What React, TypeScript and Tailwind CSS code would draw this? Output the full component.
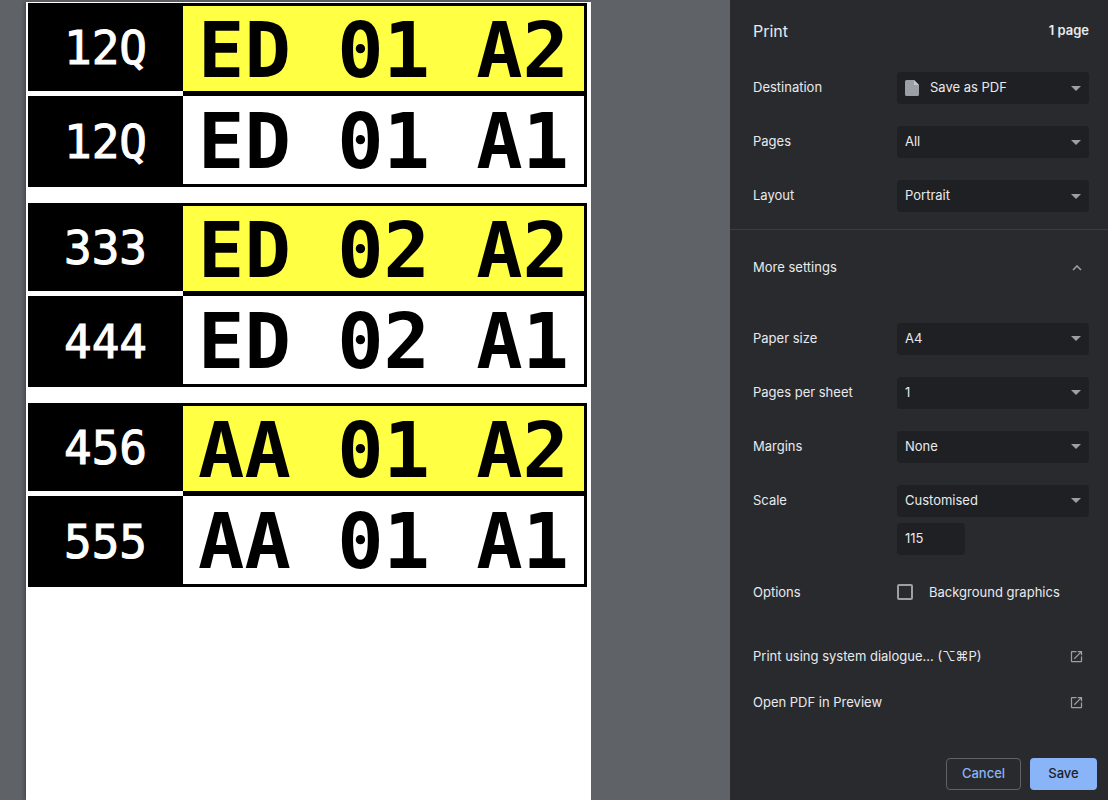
import React from 'react';

interface PlateRow {
  label: string;
  plate: string;
}

const groups: PlateRow[][] = [
  [
    { label: '12Q', plate: 'ED 01 A2' },
    { label: '12Q', plate: 'ED 01 A1' }
  ],
  [
    { label: '333', plate: 'ED 02 A2' },
    { label: '444', plate: 'ED 02 A1' }
  ],
  [
    { label: '456', plate: 'AA 01 A2' },
    { label: '555', plate: 'AA 01 A1' }
  ]
];

const mono = "font-['DejaVu_Sans_Mono',monospace]";

function PlateGroup({ rows }: { rows: PlateRow[] }) {
  return (
    <div className="flex h-[184px]">
      {/* label column, white gap between the two cells */}
      <div className="flex w-[155px] flex-col gap-[5px]">
        <div className={`flex h-[88px] items-center justify-center bg-black pt-[2px] text-[46px] leading-none text-white [-webkit-text-stroke:1px_white] ${mono}`}>
          {rows[0].label}
        </div>
        <div className={`flex flex-1 items-center justify-center bg-black text-[46px] leading-none text-white [-webkit-text-stroke:1px_white] ${mono}`}>
          {rows[1].label}
        </div>
      </div>
      {/* plate column, black frame */}
      <div className="flex flex-1 flex-col gap-[5px] bg-black pt-[3px] pr-[3px] pb-[3px]">
        <div className={`flex h-[85px] items-center justify-center bg-[#ffff44] pt-[4px] text-[77px] font-bold leading-none whitespace-pre text-black ${mono}`}>
          {rows[0].plate}
        </div>
        <div className={`flex flex-1 items-center justify-center bg-white pt-[3px] text-[77px] font-bold leading-none whitespace-pre text-black ${mono}`}>
          {rows[1].plate}
        </div>
      </div>
    </div>
  );
}

function Caret() {
  return (
    <svg width="10" height="5" viewBox="0 0 10 5" className="shrink-0">
      <path d="M0 0h10L5 5z" fill="#9aa0a6" />
    </svg>
  );
}

function Select({ value, icon }: { value: string; icon?: boolean }) {
  return (
    <div className="flex h-[32px] w-[192px] items-center rounded-[4px] bg-[#1f2023] pl-[8px] pr-[8px]">
      {icon && (
        <svg width="14" height="16" viewBox="0 0 14 16" className="mr-[11px] shrink-0">
          <path d="M1.5 0H9l5 5v9.5A1.5 1.5 0 0 1 12.5 16h-11A1.5 1.5 0 0 1 0 14.5v-13A1.5 1.5 0 0 1 1.5 0z" fill="#9aa0a6" />
          <path d="M9 0v5h5z" fill="#c4c7ca" />
        </svg>
      )}
      <span className="flex-1 text-[13px] text-[#e8eaed]">{value}</span>
      <Caret />
    </div>
  );
}

function Row({ label, children, className = '' }: { label: string; children: React.ReactNode; className?: string }) {
  return (
    <div className={`flex items-center ${className}`}>
      <span className="w-[144px] text-[13px] text-[#e8eaed]">{label}</span>
      {children}
    </div>
  );
}

function OpenIcon() {
  return (
    <svg width="15" height="15" viewBox="0 0 24 24" className="shrink-0">
      <path
        d="M19 19H5V5h7V3H5c-1.11 0-2 .9-2 2v14c0 1.1.89 2 2 2h14c1.1 0 2-.9 2-2v-7h-2v7zM14 3v2h3.59l-9.83 9.83 1.41 1.41L19 6.41V10h2V3h-7z"
        fill="#9aa0a6"
      />
    </svg>
  );
}

export default function App() {
  return (
    <div className="flex h-[800px] w-[1108px] overflow-hidden bg-[#5f6368] font-['Inter',sans-serif]">
      {/* preview */}
      <div className="flex w-[730px] shrink-0 pl-[26px] pt-[2px]">
        <div className="flex h-[798px] w-[565px] flex-col gap-[16px] bg-white pl-[2px] pr-[4px] pt-[1px] shadow-[-2px_0_3px_rgba(0,0,0,0.25)]">
          {groups.map((g, i) => (
            <PlateGroup key={i} rows={g} />
          ))}
        </div>
      </div>

      {/* settings panel */}
      <div className="flex h-[800px] flex-1 flex-col bg-[#292a2d]">
        <div className="flex items-center justify-between pl-[23px] pr-[19px] pt-[19px]">
          <span className="text-[16px] text-[#e8eaed]">Print</span>
          <span className="text-[13px] font-semibold text-[#e8eaed]">1 page</span>
        </div>

        <div className="flex flex-col gap-[22px] pl-[23px] pr-[19px] pt-[29px] pb-[17px]">
          <Row label="Destination">
            <Select value="Save as PDF" icon />
          </Row>
          <Row label="Pages">
            <Select value="All" />
          </Row>
          <Row label="Layout">
            <Select value="Portrait" />
          </Row>
        </div>

        <div className="h-px bg-[#3c3d40]" />

        <div className="flex items-center justify-between pl-[23px] pr-[26px] pt-[28px]">
          <span className="text-[13px] text-[#e8eaed]">More settings</span>
          <svg width="10" height="6" viewBox="0 0 10 6">
            <path d="M1 5l4-4 4 4" stroke="#9aa0a6" strokeWidth="1.6" fill="none" />
          </svg>
        </div>

        <div className="flex flex-col gap-[22px] pl-[23px] pr-[19px] pt-[45px]">
          <Row label="Paper size">
            <Select value="A4" />
          </Row>
          <Row label="Pages per sheet">
            <Select value="1" />
          </Row>
          <Row label="Margins">
            <Select value="None" />
          </Row>
          <div className="flex flex-col gap-[6px]">
            <Row label="Scale">
              <Select value="Customised" />
            </Row>
            <div className="ml-[144px] flex h-[32px] w-[68px] items-center rounded-[4px] bg-[#1f2023] pl-[8px] text-[13px] text-[#e8eaed]">
              115
            </div>
          </div>
        </div>

        <div className="pl-[23px] pr-[19px] pt-[28px]">
          <Row label="Options">
            <div className="flex items-center">
              <div className="h-[16px] w-[16px] rounded-[2px] border-2 border-[#9aa0a6]" />
              <span className="ml-[16px] text-[13px] text-[#e8eaed]">Background graphics</span>
            </div>
          </Row>
        </div>

        <div className="flex items-center justify-between pl-[23px] pr-[24px] pt-[45px]">
          <span className="text-[13px] text-[#e8eaed]">Print using system dialogue… (⌥⌘P)</span>
          <OpenIcon />
        </div>
        <div className="flex items-center justify-between pl-[23px] pr-[24px] pt-[26px]">
          <span className="text-[13px] text-[#e8eaed]">Open PDF in Preview</span>
          <OpenIcon />
        </div>

        <div className="mt-auto flex justify-end gap-[9px] pb-[10px] pr-[11px]">
          <button className="flex h-[32px] w-[75px] items-center justify-center rounded-[4px] border border-[#5f6368] text-[13px] font-medium text-[#8ab4f8]">
            Cancel
          </button>
          <button className="flex h-[32px] w-[67px] items-center justify-center rounded-[4px] bg-[#8ab4f8] text-[13px] font-medium text-[#202124]">
            Save
          </button>
        </div>
      </div>
    </div>
  );
}
